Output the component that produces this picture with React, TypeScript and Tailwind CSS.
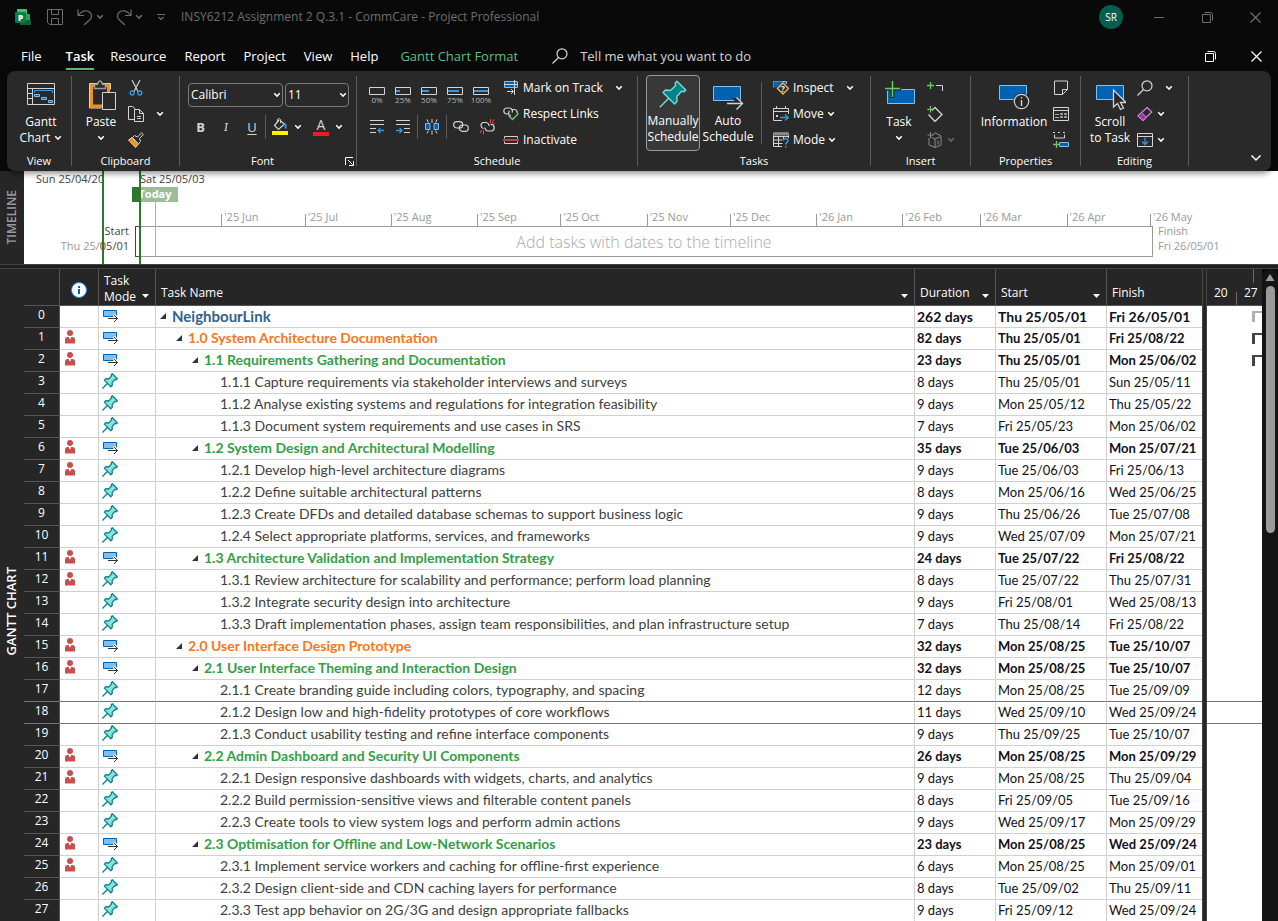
import { useState } from "react";
import type { ReactNode } from "react";

/* ---------- shared glyphs ---------- */

function Chevron({ className = "text-white" }: { className?: string }) {
  return (
    <svg width="8" height="6" viewBox="0 0 8 6" className={"shrink-0 " + className} aria-hidden="true">
      <path d="M1.2 1.3 4 4.1 6.8 1.3" fill="none" stroke="currentColor" strokeWidth="1.5" />
    </svg>
  );
}

function Icon({ w = 16, h = 16, children }: { w?: number; h?: number; children: ReactNode }) {
  return (
    <svg width={w} height={h} viewBox={`0 0 ${w} ${h}`} fill="none" className="shrink-0" aria-hidden="true">
      {children}
    </svg>
  );
}

const LINE = "#d4d4d4";
const BLUE = "#0063b1";
const EDGE = "#83beec";
const SKY = "#3a96dd";
const LEAF = "#6ccb5f";

function Pin({ size, fill, stroke, weight }: { size: number; fill: string; stroke: string; weight: number }) {
  return (
    <svg width={size} height={size} viewBox="0 0 28 28" fill="none" className="shrink-0" aria-hidden="true">
      <path d="M.8 27.200 10 18" stroke={stroke} strokeWidth={weight} />
      <path
        d="M18 1.200 26.800 10 25 11.800 22.500 11.300 17.800 16.500 18 21.500 15.500 24 4 12.500 6.500 10 11.500 10.500 16.700 5.500 16.200 3Z"
        fill={fill}
        stroke={stroke}
        strokeWidth={weight}
        strokeLinejoin="round"
      />
    </svg>
  );
}

/* ---------- ribbon icons ---------- */

const GanttIcon = () => (
  <Icon w={28} h={22}>
    <path d="M.5.5h27v21H.5zM.5 5.500h27M5.500 5.500v16M.5 10.500h5M.5 15.500h5" stroke={LINE} />
    <path d="M7.500 10V7.500h18V10" stroke={SKY} />
    <path d="M7.500 11.500h5v2h-5zM14.500 14.500h5v2h-5zM21.500 17.500h4v2h-4z" fill={BLUE} stroke={EDGE} />
  </Icon>
);

const PasteIcon = () => (
  <Icon w={28} h={31}>
    <path d="M2.500 5.500h17v20.500h-17z" stroke="#e8912d" strokeWidth="3" />
    <path d="M.5 28V3.500h21v6M.5 28h12" stroke="#ffd08a" />
    <path d="M5.500 8.500v-4h3c.5-2 1.500-3.500 2.500-3.500s2 1.500 2.500 3.500h3v4z" fill="#292929" stroke="#9a9a9a" strokeWidth="1.500" />
    <path d="M13.500 12.500h13v17h-13z" fill="#292929" stroke={LINE} />
  </Icon>
);

const CutIcon = () => (
  <Icon>
    <path d="M4 0 10 11.500M12 0 6 11.500" stroke={LINE} strokeWidth="1.200" />
    <circle cx="4.200" cy="13" r="2" stroke={SKY} strokeWidth="1.400" />
    <circle cx="11.800" cy="13" r="2" stroke={SKY} strokeWidth="1.400" />
  </Icon>
);

const CopyIcon = () => (
  <Icon>
    <path d="M6.500 13.500h-6V.5h4l3 2.500" stroke={LINE} />
    <path d="M6.500 3.500h5l4 4v8h-9z" fill="#292929" stroke={LINE} />
    <path d="M11.500 3.500v4h4M9 10.500h4M9 12.500h4" stroke={LINE} />
  </Icon>
);

const BrushIcon = () => (
  <Icon>
    <path d="M.5 8 4 5.500 10.500 12 7.500 15.500Z" fill="#e8912d" stroke="#ffd08a" />
    <path d="m4.500 5.500 2-2 3 1.500L13.500.8 15.300 2.500 11.500 6.500 12.500 9.500l-2 2.500z" fill="#292929" stroke={LINE} />
  </Icon>
);

const FillIcon = () => (
  <Icon w={16} h={18}>
    <path d="M7 2 2.500 7.500 6.500 11.500 12.500 6 8 2.500" stroke={LINE} strokeWidth="1.200" />
    <path d="M5.500 5V1.500C6 .5 8 .5 8.500 1.500V5" stroke={LINE} />
    <path d="M12 5.500c1.500.5 2 2.500 1.500 5" stroke={SKY} strokeWidth="2" />
    <path d="M0 13h16v4H0z" fill="#fff100" />
  </Icon>
);

const PercentBar = ({ value }: { value: number }) => (
  <Icon w={16} h={8}>
    <path d="M.5.5h15v7H.5z" stroke={LINE} />
    <rect x="1" y="3" width={Math.round((14 * value) / 100)} height="2" fill={SKY} />
  </Icon>
);

const IndentIcon = ({ outdent }: { outdent?: boolean }) => (
  <Icon w={16} h={14}>
    <path d={outdent ? "M1 .5h14M1 4.500h14M1 8.500h6M1 12.500h6" : "M1 .5h14M1 4.500h14M9 8.500h6M9 12.500h6"} stroke={LINE} />
    {outdent ? (
      <path d="M15 10.500H9.500M11.500 8 9 10.500l2.500 2.500" stroke={SKY} strokeWidth="1.300" />
    ) : (
      <path d="M1 10.500h5.500M4.500 8 7 10.500 4.500 13" stroke={SKY} strokeWidth="1.300" />
    )}
  </Icon>
);

const SplitIcon = () => (
  <Icon>
    <path d="M1.500 4.500h4.500v6h-4.500zM10 4.500h4.500v6H10z" fill={BLUE} stroke={EDGE} />
    <path d="M8 0v4M8 11.500v4M3 .5l1.500 3M13 .5l-1.500 3M3 14.500 4.500 11.500M13 14.500l-1.500-3" stroke={LINE} />
  </Icon>
);

const LinkIcon = () => (
  <Icon>
    <rect x=".7" y="2.700" width="9" height="6.300" rx="3.100" stroke={LINE} strokeWidth="1.200" />
    <rect x="6.300" y="6" width="9" height="6.300" rx="3.100" stroke={LINE} strokeWidth="1.200" />
  </Icon>
);

const UnlinkIcon = () => (
  <Icon>
    <path d="M4.500 9.500A3.200 3.200 0 0 1 3.800 3.500H7a3.200 3.200 0 0 1 3 3.500M11.500 5.500a3.200 3.200 0 0 1 .7 6.500H9a3.200 3.200 0 0 1-3-3.500" stroke={LINE} strokeWidth="1.200" />
    <path d="M11.500 4V0M13.300 4 14.800.5M4.500 11.500v4M2.500 11 1 14.500M14 5.500l2-1" stroke="#f04a52" />
  </Icon>
);

const TrackIcon = () => (
  <Icon>
    <path d="M1.500 1.500h13v6h-13z" fill={BLUE} stroke={EDGE} />
    <path d="M1 4.500h14M11.500 0v15" stroke={LINE} />
    <path d="M4 11.500h6M8 9l2.500 2.500L8 14" stroke={LINE} />
  </Icon>
);

const RespectIcon = () => (
  <Icon>
    <path d="M5.500 8H3.800A3 3 0 1 1 3.800 2h2.700a3 3 0 0 1 2.500 4.500M8 3.500h3.500A3 3 0 0 1 14 7.500M8 10A3 3 0 0 1 6.500 5" stroke={LINE} strokeWidth="1.200" />
    <path d="m5.500 9.500 4 4L15.500 7.500" stroke={LEAF} strokeWidth="1.400" />
  </Icon>
);

const InactivateIcon = () => (
  <Icon>
    <path d="M1.500 6.500V4.500h13v2M1.500 9.500V11.500h13V9.500" stroke={LINE} />
    <path d="M0 8h16" stroke="#f04a52" strokeWidth="1.500" />
  </Icon>
);

const AutoIcon = () => (
  <Icon w={32} h={26}>
    <path d="M1.500 1.500h27v14h-27z" fill={BLUE} stroke={EDGE} />
    <path d="M14 18.500h11L20 13h6l5 5" fill="#292929" />
    <path d="M15 18.500h15M24.500 12.500l6 6-6 6" stroke={LINE} strokeWidth="1.400" />
  </Icon>
);

const InspectIcon = () => (
  <Icon>
    <path d="M.5 7.500v-6h13V4" fill={BLUE} stroke={EDGE} />
    <path d="M.5 7.500h4l5-6H.5z" fill={BLUE} />
    <path d="M10 3 15.500 8.500 10 14 4.500 8.500Z" fill="#292929" stroke="#f0b050" strokeWidth="1.500" />
    <text x="10" y="11.500" fontSize="8" fontWeight="700" textAnchor="middle" fill="#fff" fontFamily="Open Sans, sans-serif">?</text>
  </Icon>
);

const MoveIcon = () => (
  <Icon>
    <path d="M9 14.500H.5v-12h15V8M.5 5.500h15M3.500 0v3M12.500 0v3" stroke={LINE} />
    <path d="M3 9h2v2H3z" fill={LINE} />
    <path d="M7 11.500h8M12 8.500l3.200 3-3.200 3" stroke={SKY} strokeWidth="1.300" />
  </Icon>
);

const ModeIcon = () => (
  <Icon>
    <path d="M9 14.500H.5V1h15v5M.5 4.500h15M.5 8h9M.5 11.500h9M5.500 4v10.500M10.500 4v3" stroke={LINE} />
    <path d="M0 1h16v2.500H0z" fill="#8a8a8a" />
    <path d="M10.500 8.500c0-3 4.800-2.500 4.500.3 0 1.500-2.200 1.700-2.200 3.700M12.800 14v1.600" stroke={SKY} strokeWidth="1.500" />
  </Icon>
);

const TaskIcon = () => (
  <Icon w={31} h={24}>
    <path d="M3.500 8.500h27v14h-27z" fill={BLUE} stroke={EDGE} />
    <path d="M8.500 0v17M0 7.500h17" stroke="#292929" strokeWidth="4" />
    <path d="M8.500 0v16M1 7.500h15" stroke={LEAF} strokeWidth="1.500" />
  </Icon>
);

const SummaryIcon = () => (
  <Icon>
    <path d="M9 5.500h6.500V11" stroke={LINE} />
    <path d="M3.500 2v7M0 5.500h7" stroke={LEAF} strokeWidth="1.300" />
  </Icon>
);

const MilestoneIcon = () => (
  <Icon>
    <path d="M5 4.500 8 1.500 15 8.500 8 15.500 1.500 8.500" stroke={LINE} strokeWidth="1.300" />
    <path d="M3.500 0v6.500M.3 3.300h6.500" stroke={LEAF} strokeWidth="1.300" />
  </Icon>
);

const DeliverableIcon = () => (
  <Icon>
    <path d="M2 6v7l6 2.500 6-2.500V4.500L8 7 4.500 5.500M8 7v8.500M8 .8l6 3M5 3l3-2M11 8.500v4" stroke="#8a8a8a" />
    <path d="M3.500 0v6M.5 3h6" stroke="#8a8a8a" />
  </Icon>
);

const InfoIcon = () => (
  <Icon w={31} h={26}>
    <path d="M.5.5h27v14H.5z" fill={BLUE} stroke={EDGE} />
    <circle cx="22.500" cy="16.500" r="8.500" fill="#292929" />
    <circle cx="22.500" cy="16.500" r="7.200" stroke={LINE} strokeWidth="1.200" />
    <path d="M22.500 15v6M22.500 12v1.500" stroke={LINE} strokeWidth="1.400" />
  </Icon>
);

const NotesIcon = () => (
  <Icon>
    <path d="M9.500 14.500h-8V1h13v8.500z" stroke={LINE} />
    <path d="M9.500 14.500v-5h5" stroke={LINE} />
  </Icon>
);

const DetailsIcon = () => (
  <Icon>
    <path d="M.5 1.500h15v13H.5zM.5 4.500h15" stroke={LINE} />
    <path d="M2 8.500h4M2 11.500h4M7.500 7.500h2v1h-2zM7.500 10.500h2v1h-2zM11.500 7.500h2v1h-2zM11.500 10.500h2v1h-2z" stroke="#a8a8a8" />
  </Icon>
);

const AddTimelineIcon = () => (
  <Icon>
    <path d="M0 .5h2M5 .5h2M10 .5h2M1.500 2.500v3.500h10V2.500" stroke={LINE} />
    <path d="M6.500 10.500h9v4h-9z" fill={BLUE} stroke={EDGE} />
    <path d="M3.500 9v7M0 12.500h7" stroke={LEAF} strokeWidth="1.300" />
  </Icon>
);

const ScrollIcon = () => (
  <Icon w={31} h={26}>
    <path d="M1.500.5h27v14h-27z" fill={BLUE} stroke={EDGE} />
    <path d="M18.500 5v17l4-3.500 3 6 3-1.500-3-5.500h5.500z" fill="#292929" stroke={LINE} strokeWidth="1.300" />
  </Icon>
);

const FindIcon = () => (
  <Icon>
    <circle cx="10" cy="5.800" r="5" stroke={LINE} strokeWidth="1.200" />
    <path d="M6.500 9.500.5 15.500" stroke={LINE} strokeWidth="1.200" />
  </Icon>
);

const ClearIcon = () => (
  <Icon>
    <path d="M10 1.500 14.800 6 6 14.500 1 9.800Z" stroke="#d18ae0" strokeWidth="1.200" />
    <path d="M4.500 6.500 9.500 11.300 6 14.500 1 9.800Z" fill="#a02fb0" stroke="#d18ae0" />
  </Icon>
);

const FillDownIcon = () => (
  <Icon>
    <path d="M.5 1.500h15v13H.5zM.5 4.500h15" stroke={LINE} />
    <path d="M8 5.500v7M5 9.500l3 3 3-3" stroke={SKY} strokeWidth="1.300" />
  </Icon>
);

/* ---------- ribbon layout ---------- */

function Group({ label, width, children, launcher }: { label: string; width: string; children: ReactNode; launcher?: boolean }) {
  return (
    <section aria-label={label} className={"flex shrink-0 " + width}>
      <div className="flex min-w-0 flex-1 flex-col">
        <div className="flex h-[82px]">{children}</div>
        <div className="flex items-center text-[11px] leading-4">
          <span className="flex-1 text-center">{label}</span>
          {launcher && (
            <button aria-label="Font settings" className="mr-[2px] pt-px">
              <Icon w={9} h={9}>
                <path d="M.5 8V.5H8M3 3l4.500 4.500M8.500 4v4.500H4" stroke="#fff" />
              </Icon>
            </button>
          )}
        </div>
      </div>
      <div className="mt-[5px] h-[90px] w-px bg-[#5c5c5c]" />
    </section>
  );
}

function BigButton({ icon, lines, chevron, className = "" }: { icon: ReactNode; lines: string[]; chevron?: "inline" | "below"; className?: string }) {
  return (
    <button className={"flex shrink-0 flex-col items-center text-[12px] leading-4 " + className}>
      <span className="mb-[9px] flex h-[34px] items-end justify-center">{icon}</span>
      {lines.map((line, i) => (
        <span key={line} className="flex items-center gap-1 whitespace-nowrap">
          {line}
          {chevron === "inline" && i === lines.length - 1 && <Chevron />}
        </span>
      ))}
      {chevron === "below" && (
        <span className="flex h-4 items-center">
          <Chevron />
        </span>
      )}
    </button>
  );
}

function SmallButton({ label, icon, text, chevron, far, dim }: { label?: string; icon: ReactNode; text?: string; chevron?: boolean; far?: boolean; dim?: boolean }) {
  return (
    <button aria-label={label ?? text} className="flex h-[26px] items-center text-[12px] whitespace-nowrap">
      {icon}
      {text && <span className="ml-1">{text}</span>}
      {chevron && (
        <span className={far ? "ml-3" : text ? "ml-[3px]" : "ml-1"}>
          <Chevron className={dim ? "text-[#6a6a6a]" : "text-white"} />
        </span>
      )}
    </button>
  );
}

function Picker({ label, value, options, width }: { label: string; value: string; options: string[]; width: string }) {
  return (
    <label className={"relative block " + width}>
      <span className="sr-only">{label}</span>
      <select defaultValue={value} className="block h-6 w-full appearance-none rounded border border-[#7a7a7a] bg-[#292929] pl-[2px] text-[12px] leading-5 text-white">
        {options.map((o) => (
          <option key={o}>{o}</option>
        ))}
      </select>
      <span className="pointer-events-none absolute top-[9px] right-[2px]">
        <Chevron />
      </span>
    </label>
  );
}

function Ribbon() {
  return (
    <div className="relative z-10 mx-[7px] flex h-[100px] shrink-0 overflow-hidden rounded-lg bg-[#292929] text-white shadow-[0_2px_6px_rgba(0,0,0,0.5)]">
      <Group label="View" width="w-[65px]">
        <BigButton className="w-full pl-1" icon={<GanttIcon />} lines={["Gantt", "Chart"]} chevron="inline" />
      </Group>

      <Group label="Clipboard" width="w-[108px]">
        <BigButton className="w-[56px] pl-[2px]" icon={<span className="-mb-[6px] pl-1"><PasteIcon /></span>} lines={["Paste"]} chevron="below" />
        <div className="flex flex-col pt-1">
          <SmallButton label="Cut" icon={<CutIcon />} />
          <SmallButton label="Copy" icon={<CopyIcon />} chevron far />
          <SmallButton label="Format Painter" icon={<BrushIcon />} />
        </div>
      </Group>

      <Group label="Font" width="w-[177px]" launcher>
        <div className="flex flex-col pt-3 pl-2">
          <div className="flex gap-[2px]">
            <Picker label="Font" value="Calibri" options={["Calibri", "Arial", "Segoe UI"]} width="w-[95px]" />
            <Picker label="Font size" value="11" options={["8", "9", "10", "11", "12", "14"]} width="w-[64px]" />
          </div>
          <div className="mt-2 flex h-6 items-center text-[13px] leading-5 text-[#d4d4d4]">
            <button className="w-[25px] font-bold">B</button>
            <button className="w-[26px] font-serif italic">I</button>
            <button className="w-[26px] underline underline-offset-2">U</button>
            <span className="mr-[6px] h-6 w-px bg-[#5c5c5c]" />
            <button aria-label="Background colour" className="flex items-center gap-[6px]">
              <FillIcon />
              <Chevron />
            </button>
            <button aria-label="Font colour" className="ml-[11px] flex items-center gap-[6px]">
              <span className="flex h-[18px] w-4 flex-col items-center border-b-4 border-[#ed1c24] text-[14px] leading-[14px]">A</span>
              <Chevron />
            </button>
          </div>
        </div>
      </Group>

      <Group label="Schedule" width="w-[281px]">
        <div className="flex w-[146px] flex-col pt-4 pl-3">
          <div className="flex h-8">
            {[0, 25, 50, 75, 100].map((v) => (
              <button key={v} className="flex w-[26px] flex-col items-start">
                <PercentBar value={v} />
                <span className="-ml-1 w-6 text-center text-[8px] leading-[9px] text-[#b8b8b8]">{v}%</span>
              </button>
            ))}
          </div>
          <div className="flex h-4 items-center">
            <button aria-label="Outdent Task" className="w-[26px]"><IndentIcon outdent /></button>
            <button aria-label="Indent Task" className="w-[22px]"><IndentIcon /></button>
            <span className="mr-[6px] h-6 w-px shrink-0 bg-[#5c5c5c]" />
            <button aria-label="Split Task" className="w-[22px]"><SplitIcon /></button>
            <span className="mr-[6px] h-6 w-px shrink-0 bg-[#5c5c5c]" />
            <button aria-label="Link Tasks" className="w-[26px]"><LinkIcon /></button>
            <button aria-label="Unlink Tasks"><UnlinkIcon /></button>
          </div>
        </div>
        <div className="flex flex-col items-start pt-1">
          <SmallButton icon={<TrackIcon />} text="Mark on Track" chevron far />
          <SmallButton icon={<RespectIcon />} text="Respect Links" />
          <SmallButton icon={<InactivateIcon />} text="Inactivate" />
        </div>
      </Group>

      <Group label="Tasks" width="w-[233px]">
        <div className="flex pt-1 pl-2">
          <button className="flex h-[76px] w-[54px] flex-col items-center rounded border border-[#9a9a9a] bg-[#383838] pt-1 text-[12px] leading-4">
            <Pin size={28} fill="#038387" stroke="#7fd8d8" weight={1.4} />
            <span className="mt-[5px]">Manually</span>
            <span>Schedule</span>
          </button>
          <button className="flex h-[76px] w-[56px] flex-col items-center pt-[10px] text-[12px] leading-4">
            <AutoIcon />
            <span className="mt-[2px]">Auto</span>
            <span>Schedule</span>
          </button>
          <span className="mt-[7px] mr-[11px] ml-[5px] h-[62px] w-px bg-[#5c5c5c]" />
        </div>
        <div className="flex flex-col items-start pt-1">
          <SmallButton icon={<InspectIcon />} text="Inspect" chevron far />
          <SmallButton icon={<MoveIcon />} text="Move" chevron />
          <SmallButton icon={<ModeIcon />} text="Mode" chevron />
        </div>
      </Group>

      <Group label="Insert" width="w-[100px]">
        <BigButton className="w-[56px]" icon={<TaskIcon />} lines={["Task"]} chevron="below" />
        <div className="flex flex-col pt-1">
          <SmallButton label="Summary" icon={<SummaryIcon />} />
          <SmallButton label="Milestone" icon={<MilestoneIcon />} />
          <SmallButton label="Deliverable" icon={<DeliverableIcon />} chevron dim />
        </div>
      </Group>

      <Group label="Properties" width="w-[110px]">
        <BigButton className="w-[82px] pl-1" icon={<span className="-mb-[6px]"><InfoIcon /></span>} lines={["Information"]} />
        <div className="flex flex-col pt-1">
          <SmallButton label="Notes" icon={<NotesIcon />} />
          <SmallButton label="Details" icon={<DetailsIcon />} />
          <SmallButton label="Add to Timeline" icon={<AddTimelineIcon />} />
        </div>
      </Group>

      <Group label="Editing" width="w-[108px]">
        <BigButton className="w-[56px] pl-[2px]" icon={<span className="-mb-[6px]"><ScrollIcon /></span>} lines={["Scroll", "to Task"]} />
        <div className="flex flex-col pt-1">
          <SmallButton label="Find" icon={<FindIcon />} chevron far />
          <SmallButton label="Clear" icon={<ClearIcon />} chevron />
          <SmallButton label="Fill" icon={<FillDownIcon />} chevron />
        </div>
      </Group>

      <div className="flex flex-1 items-end justify-end pr-[9px] pb-[9px]">
        <button aria-label="Collapse the ribbon">
          <Icon w={12} h={8}>
            <path d="m1.500 1.500 4.500 4.500 4.500-4.500" stroke="#fff" strokeWidth="1.500" />
          </Icon>
        </button>
      </div>
    </div>
  );
}

/* ---------- title bar and tabs ---------- */

const RestoreIcon = () => (
  <Icon w={11} h={11}>
    <path d="M.5 2.500h8v8h-8z" stroke="currentColor" />
    <path d="M2.500.5h6a2 2 0 0 1 2 2v6" stroke="currentColor" />
  </Icon>
);

const CloseIcon = () => (
  <Icon w={11} h={11}>
    <path d="m.5.5 10 10M10.500.5l-10 10" stroke="currentColor" strokeWidth="1.200" />
  </Icon>
);

function TitleBar() {
  return (
    <header className="flex h-[34px] shrink-0 items-center pl-[15px] text-[#6e6e6e]">
      <Icon w={16} h={17}>
        <path d="M2 0h10v6H2z" fill="#33c481" />
        <path d="M7 5h8v7H7z" fill="#21a366" />
        <path d="M5 11h11v5H5z" fill="#185c37" />
        <rect y="3" width="11" height="11" rx="1" fill="#107c41" />
        <text x="5.500" y="11.500" fontSize="8" fontWeight="800" textAnchor="middle" fill="#fff" fontFamily="Open Sans, sans-serif">P</text>
      </Icon>
      <button aria-label="Save" className="ml-4">
        <Icon>
          <path d="M.5.5h15v15h-13l-2-2zM4.500.5v5h7v-5M4.500 15.500v-6h7v6" stroke="currentColor" />
        </Icon>
      </button>
      <button aria-label="Undo" className="ml-[14px] flex items-center gap-[3px]">
        <Icon w={16} h={17}>
          <path d="M1 .5v6h6M1.500 6C5 1.500 10 .5 13 3.500s1.500 6-1 8L7 16" stroke="currentColor" strokeWidth="1.200" />
        </Icon>
        <Chevron className="text-[#6e6e6e]" />
      </button>
      <button aria-label="Redo" className="ml-3 flex items-center gap-[3px]">
        <Icon w={16} h={17}>
          <path d="M15 .5v6H9M14.500 6C11 1.500 6 .5 3 3.500s-1.500 6 1 8L9 16" stroke="currentColor" strokeWidth="1.200" />
        </Icon>
        <Chevron className="text-[#6e6e6e]" />
      </button>
      <button aria-label="Customise Quick Access Toolbar" className="ml-[14px]">
        <Icon w={8} h={7}>
          <path d="M0 .5h8M1.500 3 4 5.500 6.500 3" stroke="currentColor" strokeWidth="1.200" />
        </Icon>
      </button>
      <h1 className="ml-4 text-[12px] whitespace-nowrap">INSY6212 Assignment 2 Q.3.1 - CommCare - Project Professional</h1>
      <div className="ml-auto flex items-center">
        <span className="mr-[31px] flex size-6 items-center justify-center rounded-full bg-[#055f4e] text-[10px] text-white">SR</span>
        <button aria-label="Minimise" className="mr-[38px]">
          <Icon w={10} h={11}>
            <path d="M0 5.500h10" stroke="currentColor" />
          </Icon>
        </button>
        <button aria-label="Restore" className="mr-[37px]"><RestoreIcon /></button>
        <button aria-label="Close" className="mr-[17px]"><CloseIcon /></button>
      </div>
    </header>
  );
}

const TABS = ["File", "Task", "Resource", "Report", "Project", "View", "Help"];

function Tabs() {
  return (
    <nav className="flex h-[37px] shrink-0 items-start pt-3 pl-[21px] text-[13px] text-white">
      {TABS.map((t) => (
        <a
          key={t}
          href="#"
          className={
            t === "Task"
              ? "mr-4 border-b-2 border-[#5fbf7f] pb-[2px] leading-5 font-semibold"
              : t === "File"
                ? "mr-6 leading-5"
                : "mr-[18px] leading-5"
          }
        >
          {t}
        </a>
      ))}
      <a href="#" className="ml-1 leading-5 text-[#5fbf7f]">Gantt Chart Format</a>
      <label className="ml-[34px] flex items-center text-[#d4d4d4]">
        <FindIcon />
        <span className="sr-only">Tell me what you want to do</span>
        <input type="text" placeholder="Tell me what you want to do" className="ml-3 w-[200px] bg-transparent leading-5 placeholder:text-[#d4d4d4]" />
      </label>
      <div className="mt-[5px] ml-auto flex">
        <button aria-label="Restore window" className="mr-[35px]"><RestoreIcon /></button>
        <button aria-label="Close window" className="mr-4"><CloseIcon /></button>
      </div>
    </nav>
  );
}

/* ---------- timeline ---------- */

const MONTHS: [string, number][] = [
  ["", 31], ["'25 Jun", 30], ["'25 Jul", 31], ["'25 Aug", 31], ["'25 Sep", 30], ["'25 Oct", 31],
  ["'25 Nov", 30], ["'25 Dec", 31], ["'26 Jan", 31], ["'26 Feb", 28], ["'26 Mar", 31], ["'26 Apr", 30],
];

function Month({ name }: { name: string }) {
  return <span className="block h-3 border-l border-[#999] pl-[2px] text-[11px] leading-[6px] whitespace-nowrap">{name}</span>;
}

function Timeline() {
  return (
    <section aria-label="Timeline" className="flex h-[93px] shrink-0 bg-white">
      <div className="flex w-6 shrink-0 items-center justify-center bg-[#262626]">
        <span className="rotate-180 text-[12px] font-semibold text-[#9a9a9a] [writing-mode:vertical-rl]">TIMELINE</span>
      </div>
      <div className="relative flex-1 text-[11px] text-[#999]">
        <div className="pt-[43px] pr-[125px] pl-[111px]">
          <div className="flex pr-[2px]">
            {MONTHS.map(([name, days]) => (
              <div key={name} className="min-w-0 basis-0" style={{ flexGrow: days }}>
                {name && <Month name={name} />}
              </div>
            ))}
            <div className="w-px"><Month name="'26 May" /></div>
          </div>
          <div className="flex h-[31px] items-center justify-center border border-[#999] text-[16px] font-light text-[#aaa]">
            Add tasks with dates to the timeline
          </div>
        </div>
        <span className="absolute top-0 left-3 leading-[15px] text-[#444]">Sun 25/04/20</span>
        <span className="absolute top-0 left-[116px] leading-[15px] text-[#444]">Sat 25/05/03</span>
        <span className="absolute top-4 left-[108px] flex h-[15px] w-[46px] items-center justify-center bg-[#9cbd98] font-bold text-white">Today</span>
        <span className="absolute top-4 left-[108px] h-[15px] w-2 bg-[#31752f]" />
        <span className="absolute top-[31px] left-[131px] h-[55px] w-px bg-[#9cbd98]" />
        <div className="absolute top-[52px] left-0 w-[105px] text-right leading-[15px]">
          <div className="text-[#444]">Start</div>
          <div>Thu 25/<span className="text-[#444]">05/01</span></div>
        </div>
        <div className="absolute top-[52px] right-0 w-[120px] leading-[15px]">
          <div>Finish</div>
          <div>Fri 26/05/01</div>
        </div>
        <span className="absolute top-[55px] left-[111px] h-[31px] w-1 border border-r-0 border-[#444]" />
        <span className="absolute top-0 left-[78px] h-[93px] w-[2px] bg-[#31752f]" />
        <span className="absolute top-0 left-[115px] h-[93px] w-[2px] bg-[#31752f]" />
      </div>
    </section>
  );
}

/* ---------- task table ---------- */

type Task = { level: number; name: string; days: string; start: string; finish: string; person?: boolean };

const t = (level: number, name: string, days: string, start: string, finish: string, person = false): Task => ({
  level, name, days, start, finish, person,
});

const TASKS: Task[] = [
  t(0, "NeighbourLink", "262 days", "Thu 25/05/01", "Fri 26/05/01"),
  t(1, "1.0 System Architecture Documentation", "82 days", "Thu 25/05/01", "Fri 25/08/22", true),
  t(2, "1.1 Requirements Gathering and Documentation", "23 days", "Thu 25/05/01", "Mon 25/06/02", true),
  t(3, "1.1.1 Capture requirements via stakeholder interviews and surveys", "8 days", "Thu 25/05/01", "Sun 25/05/11"),
  t(3, "1.1.2 Analyse existing systems and regulations for integration feasibility", "9 days", "Mon 25/05/12", "Thu 25/05/22"),
  t(3, "1.1.3 Document system requirements and use cases in SRS", "7 days", "Fri 25/05/23", "Mon 25/06/02"),
  t(2, "1.2 System Design and Architectural Modelling", "35 days", "Tue 25/06/03", "Mon 25/07/21", true),
  t(3, "1.2.1 Develop high-level architecture diagrams", "9 days", "Tue 25/06/03", "Fri 25/06/13", true),
  t(3, "1.2.2 Define suitable architectural patterns", "8 days", "Mon 25/06/16", "Wed 25/06/25"),
  t(3, "1.2.3 Create DFDs and detailed database schemas to support business logic", "9 days", "Thu 25/06/26", "Tue 25/07/08"),
  t(3, "1.2.4 Select appropriate platforms, services, and frameworks", "9 days", "Wed 25/07/09", "Mon 25/07/21"),
  t(2, "1.3 Architecture Validation and Implementation Strategy", "24 days", "Tue 25/07/22", "Fri 25/08/22", true),
  t(3, "1.3.1 Review architecture for scalability and performance; perform load planning", "8 days", "Tue 25/07/22", "Thu 25/07/31", true),
  t(3, "1.3.2 Integrate security design into architecture", "9 days", "Fri 25/08/01", "Wed 25/08/13"),
  t(3, "1.3.3 Draft implementation phases, assign team responsibilities, and plan infrastructure setup", "7 days", "Thu 25/08/14", "Fri 25/08/22"),
  t(1, "2.0 User Interface Design Prototype", "32 days", "Mon 25/08/25", "Tue 25/10/07", true),
  t(2, "2.1 User Interface Theming and Interaction Design", "32 days", "Mon 25/08/25", "Tue 25/10/07", true),
  t(3, "2.1.1 Create branding guide including colors, typography, and spacing", "12 days", "Mon 25/08/25", "Tue 25/09/09"),
  t(3, "2.1.2 Design low and high-fidelity prototypes of core workflows", "11 days", "Wed 25/09/10", "Wed 25/09/24"),
  t(3, "2.1.3 Conduct usability testing and refine interface components", "9 days", "Thu 25/09/25", "Tue 25/10/07"),
  t(2, "2.2 Admin Dashboard and Security UI Components", "26 days", "Mon 25/08/25", "Mon 25/09/29", true),
  t(3, "2.2.1 Design responsive dashboards with widgets, charts, and analytics", "9 days", "Mon 25/08/25", "Thu 25/09/04", true),
  t(3, "2.2.2 Build permission-sensitive views and filterable content panels", "8 days", "Fri 25/09/05", "Tue 25/09/16"),
  t(3, "2.2.3 Create tools to view system logs and perform admin actions", "9 days", "Wed 25/09/17", "Mon 25/09/29"),
  t(2, "2.3 Optimisation for Offline and Low-Network Scenarios", "23 days", "Mon 25/08/25", "Wed 25/09/24", true),
  t(3, "2.3.1 Implement service workers and caching for offline-first experience", "6 days", "Mon 25/08/25", "Mon 25/09/01", true),
  t(3, "2.3.2 Design client-side and CDN caching layers for performance", "8 days", "Tue 25/09/02", "Thu 25/09/11"),
  t(3, "2.3.3 Test app behavior on 2G/3G and design appropriate fallbacks", "9 days", "Fri 25/09/12", "Wed 25/09/24"),
];

const NAME_STYLE = [
  "pl-1 text-[15px] font-bold text-[#31618b]",
  "pl-5 text-[14px] font-bold text-[#f9761c]",
  "pl-9 text-[14px] font-bold text-[#349e46]",
  "pl-16 text-[14px] text-[#404040]",
];

const VALUE_STYLE = ["text-[14px] font-bold", "text-[13px] font-bold", "text-[13px] font-bold", "text-[13px]"];

const AutoMode = () => (
  <Icon>
    <path d="M1.500 2.500h13v6h-13z" fill="#83beec" stroke="#0063b1" />
    <path d="M10 8.500 12.500 6l3 3v-1h-5z" fill="#fff" />
    <path d="M6 10.500h9.500M12 7l3.500 3.500L12 14" stroke="#fff" strokeWidth="3" />
    <path d="M6 10.500h9.500M12 7l3.500 3.500L12 14" stroke="#333" />
  </Icon>
);

const Person = () => (
  <Icon w={10} h={14}>
    <circle cx="5" cy="3" r="3" fill="#c94f4f" />
    <path d="M0 13.500V9.500Q0 7 2.500 7h5Q10 7 10 9.500v4z" fill="#c94f4f" />
    <path d="M4 7h2v1L5 9.500 4 8z" fill="#fff" />
  </Icon>
);

const Triangle = () => (
  <svg width="6" height="6" viewBox="0 0 6 6" className="shrink-0" aria-hidden="true">
    <path d="M6 0v6H0z" fill="#333" />
  </svg>
);

const DropArrow = () => (
  <svg width="7" height="4" viewBox="0 0 7 4" className="mb-[7px] shrink-0" aria-hidden="true">
    <path d="M0 0h7L3.500 4z" fill="#fff" />
  </svg>
);

function HeadCell({ label, arrow, two, last }: { label: string; arrow?: boolean; two?: boolean; last?: boolean }) {
  return (
    <th className={"h-[37px] border-b border-[#555] p-0 align-bottom font-normal " + (last ? "" : "border-r")}>
      <div className="flex items-end justify-between pr-[6px] pl-[5px]">
        <span className={"text-left leading-4 " + (two ? "pb-0" : "pb-1")}>{label}</span>
        {arrow && <DropArrow />}
      </div>
    </th>
  );
}

function TaskTable({ current }: { current: number }) {
  return (
    <table className="w-full table-fixed border-separate border-spacing-0 bg-white">
      <colgroup>
        <col className="w-9" />
        <col className="w-[39px]" />
        <col className="w-[57px]" />
        <col />
        <col className="w-[81px]" />
        <col className="w-[111px]" />
        <col className="w-[95px]" />
      </colgroup>
      <thead className="bg-[#262626] text-[12px] text-white">
        <tr>
          <th className="border-r border-b border-[#555] p-0"><span className="sr-only">Row</span></th>
          <th className="border-r border-b border-[#555] p-0">
            <div className="flex items-center justify-center pt-[6px]">
              <Icon>
                <circle cx="8" cy="8" r="7.500" fill="#fff" stroke="#2b88d8" />
                <path d="M8 7v5M8 4v2" stroke="#0063b1" strokeWidth="2" />
              </Icon>
              <span className="sr-only">Indicators</span>
            </div>
          </th>
          <HeadCell label="Task Mode" arrow two />
          <HeadCell label="Task Name" arrow />
          <HeadCell label="Duration" arrow />
          <HeadCell label="Start" arrow />
          <HeadCell label="Finish" last />
        </tr>
      </thead>
      <tbody className="text-[#101020]">
        {TASKS.map((task, i) => {
          const line = i === current || i === current - 1 ? "border-b-[#777]" : "border-b-[#d0d0d0]";
          const cell = "h-[22px] border-r border-b border-r-[#d0d0d0] p-0 align-top whitespace-nowrap " + line;
          const value = cell + " pl-[2px] font-[Lato] leading-[21px] " + VALUE_STYLE[task.level];
          return (
            <tr key={i}>
              <th className={"h-[22px] border-r border-b border-r-[#555] bg-[#262626] p-0 align-top text-[12px] leading-[18px] font-normal text-white " + (i === current || i === current - 1 ? "border-b-[#777]" : "border-b-[#555]")}>
                {i}
              </th>
              <td className={cell}>
                <div className="flex pt-[2px] pl-[5px]">{task.person && <Person />}</div>
              </td>
              <td className={cell}>
                <div className={"flex pl-[3px] " + (task.level < 3 ? "pt-[2px]" : "pt-px")}>
                  {task.level < 3 ? <AutoMode /> : <Pin size={16} fill="#8fe0e0" stroke="#038387" weight={2.2} />}
                </div>
              </td>
              <td className={cell}>
                <div className={"flex h-5 items-center font-[Lato] leading-5 " + NAME_STYLE[task.level]}>
                  {task.level < 3 && <span className="mr-[6px]"><Triangle /></span>}
                  {task.name}
                </div>
              </td>
              <td className={value}>{task.days}</td>
              <td className={value}>{task.start}</td>
              <td className={value + " border-r-0"}>{task.finish}</td>
            </tr>
          );
        })}
      </tbody>
    </table>
  );
}

/* ---------- gantt pane ---------- */

function GanttPane({ current }: { current: number }) {
  return (
    <div className="flex w-[55px] shrink-0 flex-col bg-white">
      <div className="relative flex h-[37px] shrink-0 items-end border-b border-[#555] bg-[#262626] text-[12px] text-white">
        <span className="w-[29px] pb-1 pl-[7px] leading-4">20</span>
        <span className="h-[13px] w-px bg-[#6a6a6a]" />
        <span className="pb-1 pl-[7px] leading-4">27</span>
        <span className="absolute top-0 right-2 h-[14px] w-px bg-[#6a6a6a]" />
      </div>
      {TASKS.map((_, i) => (
        <div key={i} className={"flex h-[22px] shrink-0 justify-end border-b " + (i === current || i === current - 1 ? "border-[#777]" : "border-transparent")}>
          {i < 3 && (
            <span className={"mt-[5px] h-[11px] w-[10px] border-t-2 border-l-[3px] " + (i === 0 ? "border-[#b0b0b0]" : "border-[#444]")} />
          )}
        </div>
      ))}
    </div>
  );
}

export default function App() {
  const [current] = useState(18);
  return (
    <div className="flex h-screen flex-col overflow-hidden bg-[#090909] font-['Open_Sans',sans-serif]">
      <TitleBar />
      <Tabs />
      <Ribbon />
      <Timeline />
      <div className="h-1 shrink-0 border-t border-[#444] bg-[#1f1f1f]" />
      <main className="flex min-h-0 flex-1 border-t border-[#444]">
        <div className="flex w-6 shrink-0 items-center justify-center bg-[#262626] pt-8">
          <span className="rotate-180 text-[13px] font-semibold text-white [writing-mode:vertical-rl]">GANTT CHART</span>
        </div>
        <div className="min-w-0 flex-1 overflow-hidden">
          <TaskTable current={current} />
        </div>
        <div className="w-[5px] shrink-0 border-x border-[#444] bg-[#262626]" />
        <GanttPane current={current} />
        <div className="flex w-4 shrink-0 flex-col items-center rounded-t-lg bg-[#141414] pt-[5px]">
          <Icon w={10} h={7}>
            <path d="M5 0l4.500 7H.5z" fill="#9a9a9a" />
          </Icon>
          <div className="mt-[5px] h-[247px] w-[9px] rounded-full bg-[#9a9a9a]" />
        </div>
      </main>
    </div>
  );
}
